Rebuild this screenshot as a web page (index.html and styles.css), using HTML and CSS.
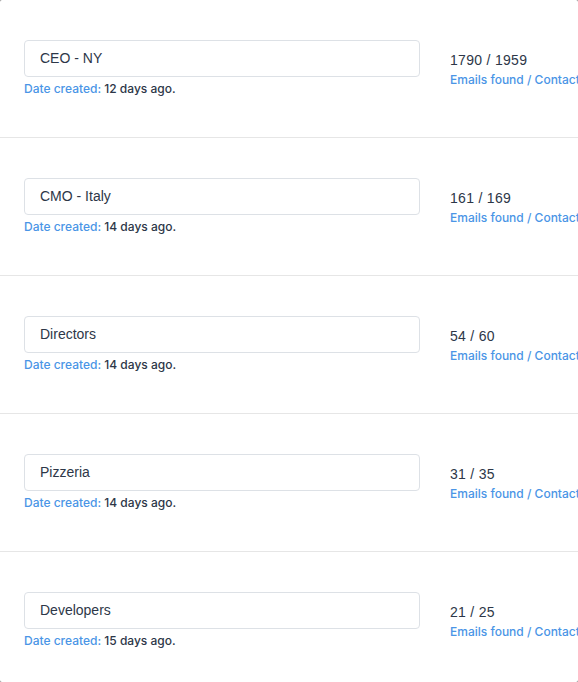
FILE: index.html
```
<!DOCTYPE html>
<html>
<head>
<meta charset="utf-8">
<link rel="stylesheet" href="styles.css">
</head>
<body>
<div class="card">
  <div class="row">
    <div class="left">
      <div class="field">CEO - NY</div>
      <div class="meta"><span class="label">Date created:</span> 12 days ago.</div>
    </div>
    <div class="right">
      <div class="count">1790 / 1959</div>
      <div class="label">Emails found / Contacts</div>
    </div>
  </div>
  <div class="row">
    <div class="left">
      <div class="field">CMO - Italy</div>
      <div class="meta"><span class="label">Date created:</span> 14 days ago.</div>
    </div>
    <div class="right">
      <div class="count">161 / 169</div>
      <div class="label">Emails found / Contacts</div>
    </div>
  </div>
  <div class="row">
    <div class="left">
      <div class="field">Directors</div>
      <div class="meta"><span class="label">Date created:</span> 14 days ago.</div>
    </div>
    <div class="right">
      <div class="count">54 / 60</div>
      <div class="label">Emails found / Contacts</div>
    </div>
  </div>
  <div class="row">
    <div class="left">
      <div class="field">Pizzeria</div>
      <div class="meta"><span class="label">Date created:</span> 14 days ago.</div>
    </div>
    <div class="right">
      <div class="count">31 / 35</div>
      <div class="label">Emails found / Contacts</div>
    </div>
  </div>
  <div class="row last">
    <div class="left">
      <div class="field">Developers</div>
      <div class="meta"><span class="label">Date created:</span> 15 days ago.</div>
    </div>
    <div class="right">
      <div class="count">21 / 25</div>
      <div class="label">Emails found / Contacts</div>
    </div>
  </div>
</div>
</body>
</html>
```
FILE: styles.css
```
html, body {
  margin: 0;
  padding: 0;
  background: #8a8a8a;
}
body {
  font-family: "Liberation Sans", Arial, sans-serif;
  color: #2d3748;
  width: 578px;
  height: 682px;
  overflow: hidden;
}
.card {
  background: #fff;
  width: 578px;
  height: 682px;
  border-radius: 2px;
  overflow: hidden;
}
.row {
  box-sizing: border-box;
  height: 138px;
  border-bottom: 1px solid #e6e6e6;
  display: flex;
  align-items: flex-start;
  padding: 40px 0 0 24px;
  gap: 30px;
}
.row.last {
  border-bottom: none;
}
.left {
  width: 396px;
  flex: none;
}
.field {
  box-sizing: border-box;
  height: 37px;
  border: 1px solid #dde1e6;
  border-radius: 4px;
  padding: 0 15px;
  font-size: 14px;
  line-height: 35px;
  color: #2d3748;
}
.meta {
  margin-top: 5px;
  font-family: Inter, "Liberation Sans", sans-serif;
  font-weight: 500;
  font-size: 12px;
  line-height: 14px;
  color: #2d3748;
}
.label {
  color: #4a95e6;
}
.right {
  flex: none;
  white-space: nowrap;
  padding-top: 12px;
}
.count {
  font-size: 14px;
  line-height: 16px;
  letter-spacing: 0.3px;
  color: #2d3748;
}
.right .label {
  font-family: Inter, "Liberation Sans", sans-serif;
  font-weight: 500;
  font-size: 12px;
  line-height: 14px;
  margin-top: 5px;
}
```
